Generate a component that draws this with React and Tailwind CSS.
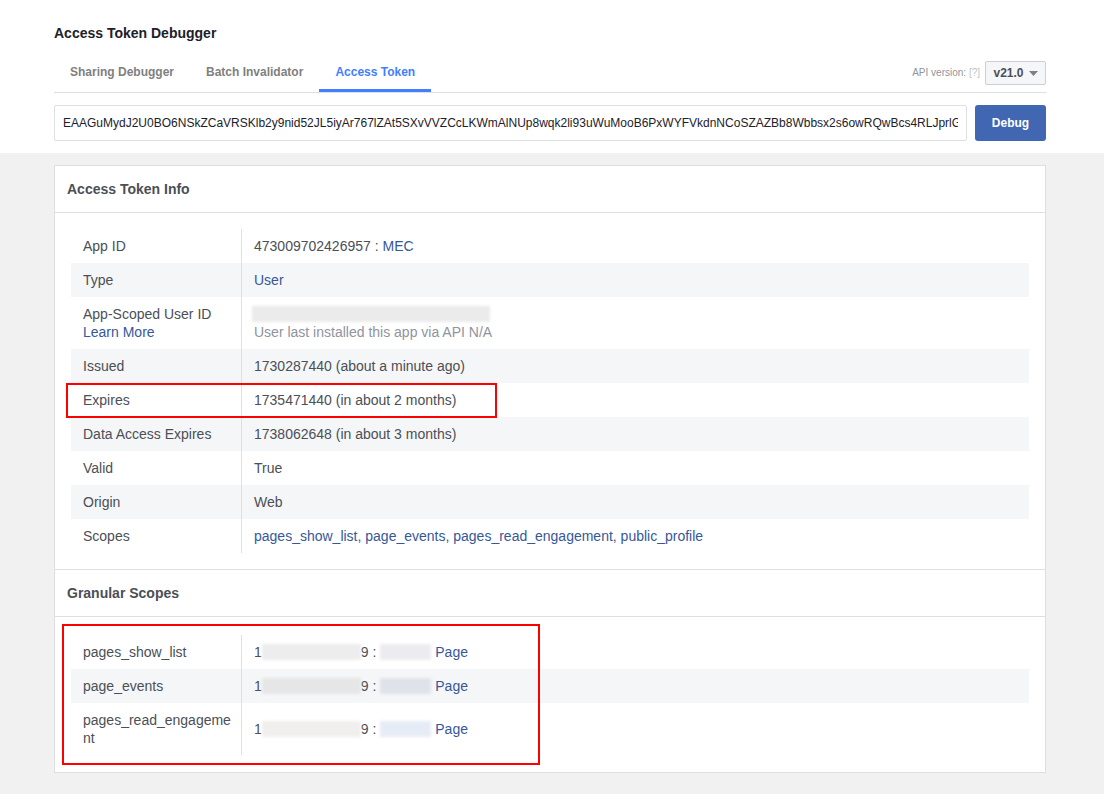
import React from "react";

const LINK = "text-[#365899]";

function Blur({ w, h = 17, color = "#e9eaed", className = "" }) {
  return (
    <span
      className={"inline-block align-middle blur-[1.5px] " + className}
      style={{ width: w, height: h, background: color }}
    />
  );
}

function Row({ label, value, shaded, children }) {
  return (
    <div className={"relative flex " + (shaded ? "bg-[#f5f6f7]" : "bg-white")}>
      <div className="w-[171px] shrink-0 border-r border-[#dddfe2] pl-3 pr-2 py-2 text-[#4b4f56] break-all">
        {label}
      </div>
      <div className="flex-1 pl-3 pr-3 py-2 text-[#4b4f56]">{value}</div>
      {children}
    </div>
  );
}

function GranularValue({ b1, b2 }) {
  return (
    <span className="inline-flex items-center whitespace-nowrap">
      <span>1</span>
      <Blur w={99} h={16} color={b1} />
      <span>9 :&nbsp;</span>
      <Blur w={51} h={16} color={b2} />
      <span className={LINK + " ml-[4px]"}>Page</span>
    </span>
  );
}

const TOKEN =
  "EAAGuMydJ2U0BO6NSkZCaVRSKlb2y9nid52JL5iyAr767lZAt5SXvVVZCcLKWmAlNUp8wqk2li93uWuMooB6PxWYFVkdnNCoSZAZBb8Wbbsx2s6owRQwBcs4RLJprlGZBX7ZCK";

export default function App() {
  return (
    <div className="font-['Liberation_Sans',Helvetica,Arial,sans-serif] bg-[#f1f1f1] min-h-[794px] border-b border-[#dddfe2] text-[14px] leading-[18px]">
      {/* Top white area */}
      <div className="bg-white px-[54px] pt-[24px] pb-[12px]">
        <div className="w-[992px]">
          <h1 className="text-[14px] leading-[18px] font-bold text-[#1d2129]">Access Token Debugger</h1>
          <div className="mt-[9px] flex items-end justify-between border-b border-[#dddfe2]">
            <div className="flex items-end text-[12px] leading-[15px] font-bold">
              <div className="px-4 pt-[14px] pb-[9px] border-b-[3px] border-transparent text-[#7f7f7f]">Sharing Debugger</div>
              <div className="px-4 pt-[14px] pb-[9px] border-b-[3px] border-transparent text-[#7f7f7f]">Batch Invalidator</div>
              <div className="px-4 pt-[14px] pb-[9px] border-b-[3px] border-[#4080ff] text-[#4080ff]">Access Token</div>
            </div>
            <div className="flex items-center mb-[7px] gap-[5px]">
              <span className="text-[10px] text-[#90949c]">
                API version: <span className="text-[#bec2c9]">[?]</span>
              </span>
              <div className="h-[24px] w-[61px] flex items-center justify-center gap-[5px] border border-[#ccd0d5] rounded-[2px] bg-[#f5f6f7] text-[12px] font-bold text-[#4b4f56]">
                <span>v21.0</span>
                <svg width="9" height="5" viewBox="0 0 9 5">
                  <path d="M0 0 L9 0 L4.5 5 Z" fill="#7f7f7f" />
                </svg>
              </div>
            </div>
          </div>
          <div className="mt-[12px] flex gap-[8px]">
            <input
              readOnly
              value={TOKEN}
              className="flex-1 min-w-0 h-[36px] border border-[#dddfe2] rounded-[2px] px-[8px] text-[12px] text-[#1d2129] outline-none bg-white"
            />
            <button className="w-[71px] h-[36px] rounded-[3px] bg-[#4267b2] text-white text-[12px] font-bold">Debug</button>
          </div>
        </div>
      </div>

      {/* Gray area with card */}
      <div className="px-[54px] pt-[12px] pb-[21px]">
        <div className="w-[992px] bg-white border border-[#dddfe2]">
          <div className="h-[47px] flex items-center px-3 border-b border-[#dddfe2] font-bold text-[#4b4f56]">
            Access Token Info
          </div>
          <div className="p-4">
            <Row label="App ID" value={<><span>473009702426957 : </span><span className={LINK}>MEC</span></>} />
            <Row shaded label="Type" value={<span className={LINK}>User</span>} />
            <Row
              label={<>App-Scoped User ID<br /><span className={LINK}>Learn More</span></>}
              value={
                <div className="flex flex-col">
                  <span className="h-[18px] flex items-center -ml-[2px]">
                    <Blur w={238} h={16} color="#ebebec" />
                  </span>
                  <span className="text-[#90949c]">User last installed this app via API N/A</span>
                </div>
              }
            />
            <Row shaded label="Issued" value="1730287440 (about a minute ago)" />
            <Row label="Expires" value="1735471440 (in about 2 months)">
              <div className="absolute left-[-5px] top-0 w-[431px] h-[35px] border-2 border-[#ff0000] z-10 pointer-events-none" />
            </Row>
            <Row shaded label="Data Access Expires" value="1738062648 (in about 3 months)" />
            <Row label="Valid" value="True" />
            <Row shaded label="Origin" value="Web" />
            <Row
              label="Scopes"
              value={<span className={LINK}>pages_show_list, page_events, pages_read_engagement, public_profile</span>}
            />
          </div>
          <div className="h-[48px] flex items-center px-3 border-y border-[#dddfe2] font-bold text-[#4b4f56]">
            Granular Scopes
          </div>
          <div className="relative px-4 pt-[18px] pb-[17px]">
            <Row label="pages_show_list" value={<GranularValue b1="#ededee" b2="#ececf0" />} />
            <Row shaded label="page_events" value={<GranularValue b1="#e6e6e7" b2="#e0e2ea" />} />
            <Row label="pages_read_engagement" value={<div className="h-[36px] flex items-center"><GranularValue b1="#f1efed" b2="#e6ecf6" /></div>} />
            <div className="absolute left-[7px] top-[7px] w-[478px] h-[141px] border-2 border-[#ff0000] pointer-events-none" />
          </div>
        </div>
      </div>
    </div>
  );
}
